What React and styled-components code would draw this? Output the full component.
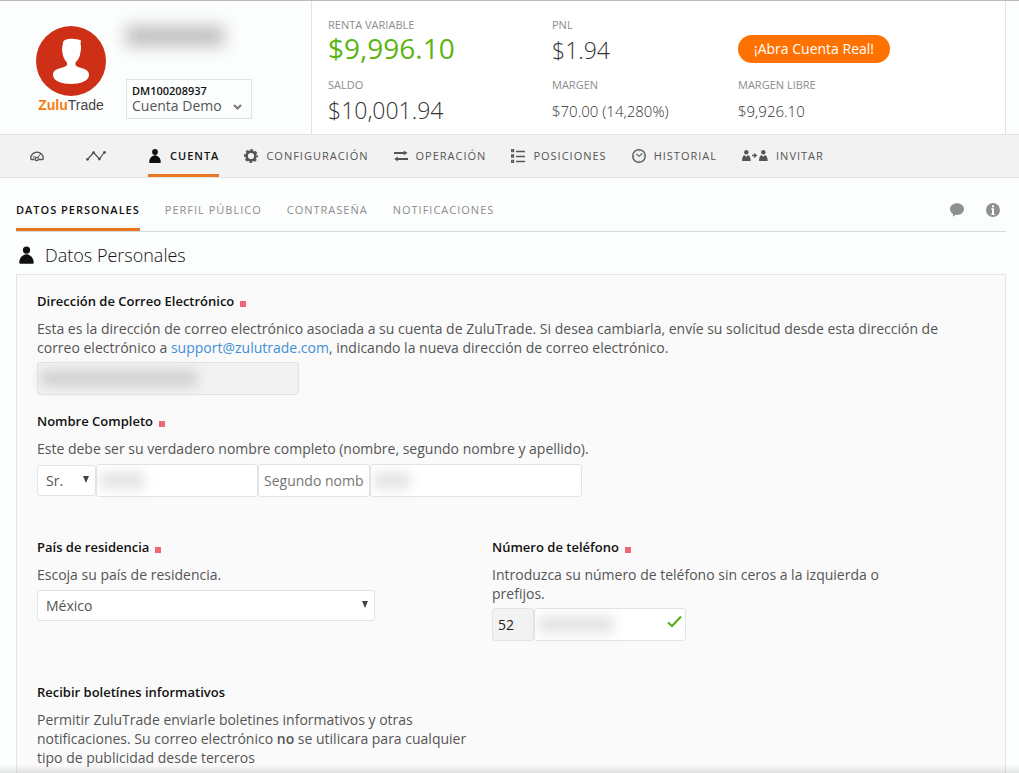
import styled, { createGlobalStyle, css } from "styled-components"

const GlobalStyle = createGlobalStyle`
  * {
    box-sizing: border-box;
  }

  body {
    margin: 0;
    background: #fcfdfd;
    color: #555;
    font-family: "Open Sans", "Noto Sans", sans-serif;
    font-size: 14px;
    line-height: 19px;
  }

  h1, h2, h3, p, dl, dd, dt {
    margin: 0;
  }

  input, select, button {
    font: inherit;
    color: inherit;
  }

  a {
    text-decoration: none;
  }
`

const Page = styled.div`
  display: flex;
  flex-direction: column;
  min-height: 100vh;
`

/* Header */

const Header = styled.header`
  display: flex;
  height: 134px;
  padding-right: 13px;
  border-top: 1px solid #bbb;
`

const Profile = styled.div`
  display: flex;
  gap: 20px;
  width: 311px;
  padding: 25px 16px 0 36px;
`

const Brand = styled.div`
  width: 70px;
`

const Wordmark = styled.p`
  color: #444;
  font-family: "Liberation Sans", sans-serif;
  font-size: 14px;
  line-height: 19px;
  text-align: center;

  b {
    color: #f57c14;
  }
`

const Account = styled.div`
  display: flex;
  flex-direction: column;
  justify-content: space-between;
  height: 93px;
`

const HiddenName = styled.div`
  width: 98px;
  height: 20px;
  background: #bdbdbd;
  filter: blur(8px);
`

const AccountBox = styled.div`
  width: 126px;
  height: 40px;
  padding: 3px 5px 0;
  border: 1px solid #e2e4e4;
`

const AccountNumber = styled.label`
  display: block;
  color: #111;
  font-size: 11px;
  font-weight: 600;
  line-height: 15px;
`

const Metrics = styled.dl`
  display: grid;
  flex: 1;
  grid-template-columns: 224px 186px 1fr;
  grid-template-rows: 60px 60px;
  padding: 15px 0 0 16px;
  border: 1px solid #e2e4e4;
  border-width: 0 1px;
  background: #fff;
`

const MetricLabel = styled.dt`
  color: #8c8c8c;
  font-size: 11px;
  line-height: 18px;
`

const valueSizes = {
  big: css`
    color: #5cb511;
    font-size: 28px;
    font-weight: 400;
    line-height: 28px;
  `,
  medium: css`
    font-size: 23px;
    line-height: 32px;
  `,
  small: css`
    font-size: 15px;
    line-height: 34px;
  `,
}

const MetricValue = styled.dd`
  color: #333;
  font-weight: 300;
  ${(props) => valueSizes[props.$size]}
`

const RealAccountButton = styled.button`
  justify-self: start;
  height: 28px;
  margin-top: 19px;
  padding: 0 16px;
  border: 0;
  border-radius: 14px;
  background: #ff7200;
  color: #fff;
  line-height: 26px;
`

/* Navigation */

const Nav = styled.nav`
  display: flex;
  gap: 25px;
  height: 44px;
  padding-left: 30px;
  border: 1px solid #e2e3e3;
  border-width: 1px 0;
  background: #f2f2f2;
`

const NavLink = styled.a`
  display: flex;
  align-items: center;
  gap: 8px;
  margin-right: ${(props) => (props.$iconOnly ? "17px" : "0")};
  padding-top: 2px;
  border-bottom: 3px solid ${(props) => (props.$active ? "#e87722" : "transparent")};
  color: ${(props) => (props.$active ? "#111" : "#555")};
  font-size: 11px;
  font-weight: ${(props) => (props.$active ? 600 : 400)};
  letter-spacing: 1px;
`

const Tabs = styled.nav`
  display: flex;
  gap: 25px;
  height: 54px;
  margin: 0 13px 0 16px;
  border-bottom: 1px solid #d8dadc;
`

const Tab = styled.a`
  display: flex;
  align-items: center;
  padding-top: 12px;
  border-bottom: 3px solid ${(props) => (props.$active ? "#e87722" : "transparent")};
  color: ${(props) => (props.$active ? "#111" : "#8c8c8c")};
  font-size: 11px;
  font-weight: ${(props) => (props.$active ? 600 : 400)};
  letter-spacing: 1px;
`

const TabTools = styled.div`
  display: flex;
  align-items: center;
  gap: 22px;
  margin-left: auto;
  padding: 11px 6px 0 0;
`

const IconButton = styled.button`
  display: flex;
  padding: 0;
  border: 0;
  background: none;
  color: #8f9191;
`

/* Form */

const PageTitle = styled.h1`
  display: flex;
  align-items: center;
  gap: 11px;
  height: 42px;
  padding: 4px 0 0 19px;
  color: #111;
  font-size: 18px;
  font-weight: 300;
`

const Panel = styled.form`
  flex: 1;
  margin: 0 13px 0 16px;
  padding: 17px 20px 4px;
  border: 1px solid #e5e6e6;
  border-bottom: 0;
  background: #fafafa;
`

const Field = styled.section`
  margin-bottom: ${(props) => (props.$spaced ? "41px" : "17px")};
  padding-right: 16px;
`

const Columns = styled.div`
  display: grid;
  grid-template-columns: 48% 48%;
  row-gap: 42px;
`

const Column = styled.section`
  padding-right: 16px;
`

const FieldTitle = styled.h2`
  display: flex;
  align-items: center;
  gap: 6px;
  margin-bottom: 8px;
  color: #111;
  font-size: 13px;
  font-weight: 600;
`

const Required = styled.span`
  width: 6px;
  height: 6px;
  margin-top: 4px;
  background: #ee6970;
`

const Help = styled.p`
  margin-bottom: ${(props) => (props.$short ? "6px" : "5px")};

  a {
    color: #3f8fd8;
  }

  b {
    font-weight: 600;
  }
`

const Controls = styled.div`
  display: flex;
  align-items: center;
`

const InputWrap = styled.div`
  position: relative;
  width: ${(props) => props.$width}px;
`

const Input = styled.input`
  display: block;
  width: 100%;
  height: 33px;
  padding: 0 5px;
  border: 1px solid #e2e3e3;
  border-radius: 3px;
  background: ${(props) => (props.readOnly ? "#f2f2f2" : "#fff")};
  color: #222;

  &::placeholder {
    color: #757575;
    opacity: 1;
  }
`

const Redacted = styled.span`
  position: absolute;
  top: 8px;
  left: 4px;
  width: ${(props) => props.$width}px;
  height: 17px;
  background: ${(props) => (props.$dark ? "#d2d2d2" : "#e4e4e4")};
  filter: blur(6px);
`

const Valid = styled.span`
  position: absolute;
  top: 7px;
  right: 4px;
  display: flex;
  color: #58ad16;
`

const SelectWrap = styled.div`
  position: relative;
  width: ${(props) => props.$width}px;

  svg {
    position: absolute;
    top: 11px;
    right: 7px;
    pointer-events: none;
  }
`

const Select = styled.select`
  display: block;
  width: 100%;
  height: 31px;
  padding: 0 8px;
  border: 1px solid #e2e3e3;
  border-radius: 3px;
  background: #fff;
  appearance: none;
`

const AccountSelect = styled(Select)`
  height: 15px;
  padding: 0;
  border: 0;
  border-radius: 0;
  background: none;
  line-height: 15px;
`

const AccountArrow = styled.span`
  position: absolute;
  top: -5px;
  right: -3px;
`

const BottomShade = styled.div`
  position: fixed;
  right: 0;
  bottom: 0;
  left: 0;
  height: 8px;
  background: linear-gradient(transparent, rgba(0, 0, 0, 0.1));
  pointer-events: none;
`

/* Icons */

function AvatarIcon() {
  return (
    <svg width="70" height="70" viewBox="0 0 70 70" display="block">
      <circle cx="35" cy="35" r="35" fill="#cd3017" />
      <path
        fill="#fff"
        d="M27 17C27 14 31 12.800 36 12.800C38 12.800 43 13.500 45 14.500L44.500 18C45.500 21 45 23 44.500 26C44 31 42 34 39.500 36.500V39C42 43 53 41 53 49C53 55 44 58 35 58S17 55 17 49C17 41 28 43 31 39V36.500C28.500 34 27 31 26.500 27C25.500 23 26.500 20 27 17z"
      />
    </svg>
  )
}

function PersonIcon({ width = 14, height = 14 }) {
  return (
    <svg width={width} height={height} viewBox="0 0 12 14" fill="currentColor">
      <circle cx="6" cy="3" r="2.900" />
      <path d="M6 6.300c2 0 5.800 2.200 5.800 6.700 0 .6-.4 1-1 1H1.200c-.6 0-1-.4-1-1C.2 8.500 4 6.300 6 6.300z" />
    </svg>
  )
}

function GaugeIcon() {
  return (
    <svg width="14" height="12" viewBox="0 0 14 12" fill="none" stroke="currentColor" strokeWidth="1.300">
      <path d="M4.500 9.500H1.500C.8 9.500.7 9 .7 8.500a6.300 6.300 0 0 1 12.600 0c0 .6-.2 1-.9 1H9" />
      <path d="M3 6.800l2.500.2M7.600 7.600L10.500 4" strokeWidth="1" />
      <circle cx="6.800" cy="9" r="1.600" />
    </svg>
  )
}

function TrendIcon() {
  return (
    <svg width="20" height="10" viewBox="0 0 20 10" fill="currentColor">
      <path d="M1.500 8.500l6-7 6 6.500 5-7" fill="none" stroke="currentColor" strokeWidth="1.200" />
      <circle cx="1.500" cy="8.300" r="1.400" />
      <circle cx="7.500" cy="1.700" r="1.400" />
      <circle cx="13.300" cy="8" r="1.400" />
      <circle cx="18.500" cy="1.500" r="1.400" />
    </svg>
  )
}

function GearIcon() {
  return (
    <svg width="14" height="14" viewBox="0 0 14 14" fill="none" stroke="currentColor">
      <circle cx="7" cy="7" r="4.400" strokeWidth="2.600" />
      <circle cx="7" cy="7" r="6.100" strokeWidth="1.800" strokeDasharray="2.700 2.091" strokeDashoffset="1.350" />
    </svg>
  )
}

function SwapIcon() {
  return (
    <svg width="14" height="12" viewBox="0 0 15 12" fill="currentColor">
      <path d="M0 1.800h10.500V0L14.500 2.800 10.500 5.200V3.800H0zM15 8.200H4V6.500L.3 9.200 4 12v-1.800h11z" />
    </svg>
  )
}

function ListIcon() {
  return (
    <svg width="14" height="14" viewBox="0 0 14 14" fill="none" stroke="currentColor">
      <path d="M5 2.500h9M5 7.500h9M5 12.500h9" strokeWidth="1.400" />
      <path d="M.7.700h1.800v2h-1.800zM.7 6h1.800v2h-1.800zM.7 11.300h1.800v2h-1.800z" strokeWidth="1.300" />
    </svg>
  )
}

function ClockIcon() {
  return (
    <svg width="14" height="14" viewBox="0 0 14 14" fill="none" stroke="currentColor">
      <circle cx="7" cy="7" r="6.300" strokeWidth="1.300" />
      <path d="M4.300 4.800l2.700 2.500 3.300-2.800" strokeWidth="1.100" />
      <path d="M7 1.500v1M7 11.500v1M1.500 7h1M11.500 7h1" strokeWidth=".8" />
    </svg>
  )
}

function InviteIcon() {
  return (
    <svg width="26" height="11" viewBox="0 0 26 11" fill="currentColor">
      <circle cx="4.300" cy="2.200" r="2.200" />
      <path d="M0 11c0-4 1.200-5.800 2.800-5.800l1.500 1.600 1.500-1.600c1.600 0 2.900 1.800 2.900 5.800z" />
      <path d="M10 4.800h2.200V2.800l3 2.700-3 2.700V6.200H10z" />
      <circle cx="21.300" cy="2.200" r="2.200" />
      <path d="M17 11c0-4 1.200-5.800 2.800-5.800l1.500 1.600 1.500-1.600c1.600 0 2.900 1.800 2.900 5.800z" />
    </svg>
  )
}

function ChatIcon() {
  return (
    <svg width="14" height="14" viewBox="0 0 14 14" fill="currentColor">
      <path d="M7 .3c3.900 0 7 2.500 7 5.800s-3.100 5.900-7 5.900c-.6 0-1.200 0-1.700-.2-.6.900-1.500 1.400-2.800 1.700.5-.8.600-1.500.5-2.500C1.200 10 0 8.300 0 6.100 0 2.800 3.100.3 7 .3z" />
    </svg>
  )
}

function InfoIcon() {
  return (
    <svg width="14" height="14" viewBox="0 0 14 14">
      <circle cx="7" cy="7" r="7" fill="currentColor" />
      <path fill="#fff" d="M6 2.200h2v2H6zM5.300 5.200H8v5.600h.7V12H5.300v-1.200H6V6.400h-.7z" />
    </svg>
  )
}

function CheckIcon() {
  return (
    <svg width="15" height="13" viewBox="0 0 15 13" fill="none" stroke="currentColor" strokeWidth="2">
      <path d="M1 7.500l4 3.500 9-9.500" />
    </svg>
  )
}

function ArrowIcon() {
  return (
    <svg width="6" height="7" viewBox="0 0 6 7" fill="#444">
      <path d="M0 0h6L3 7z" />
    </svg>
  )
}

function ChevronIcon() {
  return (
    <svg width="9" height="7" viewBox="0 0 9 7" fill="none" stroke="#777" strokeWidth="2">
      <path d="M1 1l3.500 3.500L8 1" />
    </svg>
  )
}

const navItems = [
  { name: "Panel", icon: GaugeIcon, iconOnly: true },
  { name: "Rendimiento", icon: TrendIcon, iconOnly: true },
  { name: "CUENTA", icon: PersonIcon, active: true },
  { name: "CONFIGURACIÓN", icon: GearIcon },
  { name: "OPERACIÓN", icon: SwapIcon },
  { name: "POSICIONES", icon: ListIcon },
  { name: "HISTORIAL", icon: ClockIcon },
  { name: "INVITAR", icon: InviteIcon },
]

const tabs = ["DATOS PERSONALES", "PERFIL PÚBLICO", "CONTRASEÑA", "NOTIFICACIONES"]

function Metric({ label, value, size }) {
  return (
    <div>
      <MetricLabel>{label}</MetricLabel>
      <MetricValue $size={size}>{value}</MetricValue>
    </div>
  )
}

function Title({ children, htmlFor, required }) {
  return (
    <FieldTitle>
      {htmlFor ? <label htmlFor={htmlFor}>{children}</label> : children}
      {required && <Required />}
    </FieldTitle>
  )
}

export default function App() {
  return (
    <Page>
      <GlobalStyle />
      <Header>
        <Profile>
          <Brand>
            <AvatarIcon />
            <Wordmark>
              <b>Zulu</b>Trade
            </Wordmark>
          </Brand>
          <Account>
            <HiddenName />
            <AccountBox>
              <AccountNumber htmlFor="account">DM100208937</AccountNumber>
              <SelectWrap $width={114}>
                <AccountSelect id="account">
                  <option>Cuenta Demo</option>
                </AccountSelect>
                <AccountArrow>
                  <ChevronIcon />
                </AccountArrow>
              </SelectWrap>
            </AccountBox>
          </Account>
        </Profile>
        <Metrics>
          <Metric label="RENTA VARIABLE" value="$9,996.10" size="big" />
          <Metric label="PNL" value="$1.94" size="medium" />
          <RealAccountButton type="button">¡Abra Cuenta Real!</RealAccountButton>
          <Metric label="SALDO" value="$10,001.94" size="medium" />
          <Metric label="MARGEN" value="$70.00 (14,280%)" size="small" />
          <Metric label="MARGEN LIBRE" value="$9,926.10" size="small" />
        </Metrics>
      </Header>

      <Nav>
        {navItems.map(({ name, icon: Icon, iconOnly, active }) => (
          <NavLink
            key={name}
            href="#"
            aria-label={name}
            $iconOnly={iconOnly}
            $active={active}
          >
            <Icon />
            {!iconOnly && name}
          </NavLink>
        ))}
      </Nav>

      <Tabs>
        {tabs.map((tab, i) => (
          <Tab key={tab} href="#" $active={i === 0}>
            {tab}
          </Tab>
        ))}
        <TabTools>
          <IconButton type="button" aria-label="Chat">
            <ChatIcon />
          </IconButton>
          <IconButton type="button" aria-label="Información">
            <InfoIcon />
          </IconButton>
        </TabTools>
      </Tabs>

      <PageTitle>
        <PersonIcon width={15} height={18} />
        Datos Personales
      </PageTitle>

      <Panel>
        <Field>
          <Title htmlFor="email" required>
            Dirección de Correo Electrónico
          </Title>
          <Help>
            Esta es la dirección de correo electrónico asociada a su cuenta de
            ZuluTrade. Si desea cambiarla, envíe su solicitud desde esta
            dirección de correo electrónico a{" "}
            <a href="mailto:support@zulutrade.com">support@zulutrade.com</a>,
            indicando la nueva dirección de correo electrónico.
          </Help>
          <InputWrap $width={262}>
            <Input id="email" readOnly />
            <Redacted $width={156} $dark />
          </InputWrap>
        </Field>

        <Field $spaced>
          <Title htmlFor="name" required>
            Nombre Completo
          </Title>
          <Help $short>
            Este debe ser su verdadero nombre completo (nombre, segundo nombre y
            apellido).
          </Help>
          <Controls>
            <SelectWrap $width={59}>
              <Select aria-label="Tratamiento">
                <option>Sr.</option>
              </Select>
              <ArrowIcon />
            </SelectWrap>
            <InputWrap $width={162}>
              <Input id="name" />
              <Redacted $width={44} />
            </InputWrap>
            <InputWrap $width={112}>
              <Input placeholder="Segundo nombre" aria-label="Segundo nombre" />
            </InputWrap>
            <InputWrap $width={212}>
              <Input aria-label="Apellido" />
              <Redacted $width={36} />
            </InputWrap>
          </Controls>
        </Field>

        <Columns>
          <Column>
            <Title htmlFor="country" required>
              País de residencia
            </Title>
            <Help $short>Escoja su país de residencia.</Help>
            <SelectWrap $width={338}>
              <Select id="country">
                <option>México</option>
              </Select>
              <ArrowIcon />
            </SelectWrap>
          </Column>
          <Column>
            <Title htmlFor="phone" required>
              Número de teléfono
            </Title>
            <Help>
              Introduzca su número de teléfono sin ceros a la izquierda o
              prefijos.
            </Help>
            <Controls>
              <InputWrap $width={42}>
                <Input defaultValue="52" readOnly aria-label="Prefijo" />
              </InputWrap>
              <InputWrap $width={152}>
                <Input id="phone" />
                <Redacted $width={76} />
                <Valid>
                  <CheckIcon />
                </Valid>
              </InputWrap>
            </Controls>
          </Column>
          <Column>
            <Title>Recibir boletínes informativos</Title>
            <Help>
              Permitir ZuluTrade enviarle boletines informativos y otras
              notificaciones. Su correo electrónico <b>no</b> se utilicara para
              cualquier tipo de publicidad desde terceros
            </Help>
          </Column>
        </Columns>
      </Panel>
      <BottomShade />
    </Page>
  )
}
